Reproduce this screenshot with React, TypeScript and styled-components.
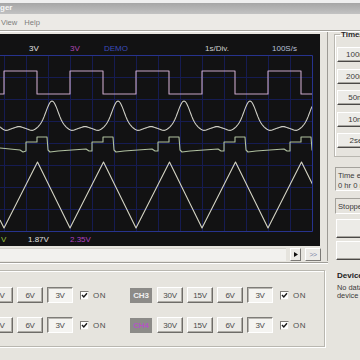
import React from "react";
import styled, { createGlobalStyle } from "styled-components";

const Global = createGlobalStyle`
  html, body { margin: 0; padding: 0; background: #e6e4de; }
  body {
    width: 360px; height: 360px; overflow: hidden;
    font-family: "Liberation Sans", Arial, sans-serif;
  }
  * { box-sizing: border-box; }
`;

const Window = styled.div`
  width: 360px;
  height: 360px;
  overflow: hidden;
  display: flex;
  flex-direction: column;
  background: #e6e4de;
`;

const TitleBar = styled.div`
  height: 14px;
  flex: none;
  background: linear-gradient(#efefef 0 3px, #a6a6a6 3px, #c2c2c2 14px);
  color: #f6f6f6;
  font-size: 8px;
  font-weight: bold;
  line-height: 10px;
  padding-top: 3px;
  white-space: nowrap;
`;

const MenuBar = styled.div`
  height: 17px;
  flex: none;
  display: flex;
  align-items: center;
  gap: 7px;
  padding-left: 1px;
  background: #eceae6;
  font-size: 7.6px;
  color: #7c7c7c;
  border-bottom: 1px solid #a4a29c;
`;

const MenuItem = styled.span``;

const Content = styled.div`
  flex: 1;
  display: flex;
  border-top: 1px solid #ffffff;
`;

const LeftCol = styled.div`
  width: 328px;
  flex: none;
  display: flex;
  flex-direction: column;
`;

const ScopePanel = styled.div`
  display: flex;
  flex-direction: column;
  padding: 2px 6px 0 0;
  border-right: 1px solid #9c9a94;
`;

const Screen = styled.div`
  width: 320px;
  height: 212px;
  background: #121213;
  display: flex;
  flex-direction: column;
`;

const ScreenRow = styled.div<{ $h: number; $pl: number; $pt: number }>`
  height: ${(p) => p.$h}px;
  flex: none;
  display: flex;
  align-items: center;
  padding-left: ${(p) => p.$pl}px;
  padding-top: ${(p) => p.$pt}px;
  font-size: 8px;
  white-space: nowrap;
`;

const ScreenLabel = styled.span<{ $w: number; $c: string }>`
  width: ${(p) => p.$w}px;
  flex: none;
  color: ${(p) => p.$c};
`;

const Plot = styled.svg`
  display: block;
  flex: none;
`;

const ScrollRow = styled.div`
  height: 13px;
  margin-top: 2px;
  display: flex;
  gap: 4px;
`;

const ScrollTrack = styled.div`
  flex: 1;
  background: #f2f1ee;
  border-top: 1px solid #d4d2cc;
`;

const SmallBtn = styled.div<{ $w: number }>`
  width: ${(p) => p.$w}px;
  height: 13px;
  flex: none;
  display: flex;
  align-items: center;
  justify-content: center;
  background: #ecebe7;
  border: 1px solid;
  border-color: #ffffff #7c7a76 #7c7a76 #ffffff;
  font-size: 7px;
  color: #8088a8;
  letter-spacing: -0.5px;
`;

const Separator = styled.div`
  height: 2px;
  margin-top: 1px;
  border-top: 1px solid #a09e98;
  border-bottom: 1px solid #ffffff;
`;

const ChannelGroup = styled.div`
  margin: 6px 3px 0 -20px;
  height: 77px;
  border: 1px solid #b9b7b0;
  box-shadow: inset 1px 1px 0 #ffffff, 1px 1px 0 #ffffff;
  padding: 16px 0 0 6px;
  display: flex;
  flex-direction: column;
  gap: 14px;
`;

const ChannelRow = styled.div`
  display: flex;
  align-items: center;
  gap: 4px;
  height: 16px;
`;

const VBtn = styled.div<{ $sunken?: boolean; $ml?: number }>`
  width: 26px;
  height: 16px;
  flex: none;
  margin-left: ${(p) => p.$ml ?? 0}px;
  display: flex;
  align-items: center;
  justify-content: center;
  font-size: 8px;
  color: #4a4a4a;
  letter-spacing: -0.3px;
  background: ${(p) => (p.$sunken ? "#f5f4f1" : "#ecebe7")};
  border: 1px solid;
  border-color: ${(p) =>
    p.$sunken ? "#7e7c78 #ffffff #ffffff #7e7c78" : "#ffffff #6e6c68 #6e6c68 #ffffff"};
  box-shadow: ${(p) =>
    p.$sunken ? "inset 1px 1px 0 #b8b6b0" : "inset -1px -1px 0 #aeaca6"};
`;

const Check = styled.div<{ $ml?: number }>`
  width: 9px;
  height: 9px;
  flex: none;
  margin-left: ${(p) => p.$ml ?? 0}px;
  background: #ffffff;
  border: 1px solid;
  border-color: #7e7c78 #e8e6e0 #e8e6e0 #7e7c78;
  display: flex;
  align-items: center;
  justify-content: center;
`;

const OnText = styled.span`
  font-size: 8px;
  color: #4e4e4e;
  letter-spacing: 0.6px;
  width: 12px;
  flex: none;
`;

const ChTag = styled.div<{ $c: string; $ml: number }>`
  width: 22px;
  height: 15px;
  flex: none;
  margin-left: ${(p) => p.$ml}px;
  background: #8c8b88;
  color: ${(p) => p.$c};
  font-size: 8px;
  font-weight: bold;
  display: flex;
  align-items: center;
  justify-content: center;
  letter-spacing: -0.2px;
`;

const RightCol = styled.div`
  flex: 1;
  margin-left: 6px;
  display: flex;
  flex-direction: column;
  white-space: nowrap;
`;

const TimeGroup = styled.fieldset`
  margin: -2px 0 0 0;
  padding: 8px 0 8px 2px;
  border: 1px solid #b9b7b0;
  border-right: none;
  box-shadow: inset 1px 1px 0 #ffffff;
  display: flex;
  flex-direction: column;
  gap: 6.5px;
  min-width: 0;
`;

const Legend = styled.legend`
  padding: 0 1px;
  margin-left: 3px;
  font-size: 8px;
  font-weight: bold;
  color: #2a2a2a;
  line-height: 9px;
`;

const TimeBtn = styled.div<{ $h?: number }>`
  width: 42px;
  height: ${(p) => p.$h ?? 15}px;
  flex: none;
  display: flex;
  align-items: center;
  justify-content: center;
  font-size: 8px;
  color: #3c3c3c;
  background: #ecebe7;
  border: 1px solid;
  border-color: #ffffff #4a4846 #4a4846 #ffffff;
  box-shadow: inset -1px -1px 0 #a8a6a0;
`;

const InfoBox = styled.div<{ $h: number; $mt: number }>`
  margin-top: ${(p) => p.$mt}px;
  margin-left: 1px;
  height: ${(p) => p.$h}px;
  border: 1px solid;
  border-color: #a4a29c #ffffff #ffffff #a4a29c;
  border-right: none;
  padding: 3px 0 0 2px;
  font-size: 7.6px;
  line-height: 10px;
  color: #3a3a3a;
`;

const BigBtns = styled.div`
  margin-top: 5px;
  margin-left: 2px;
  display: flex;
  flex-direction: column;
  gap: 3px;
`;

const Device = styled.div`
  margin-top: 12px;
  margin-left: 3px;
  font-size: 7.4px;
  line-height: 8.5px;
  color: #3a3a3a;
`;

const DeviceTitle = styled.div`
  font-weight: bold;
  font-size: 8px;
  color: #222;
  margin-bottom: 3px;
`;

// ---------- waveform geometry ----------
const P = 66;
const GRID = 22;

function squarePath(): string {
  let d = "M0,95 L4,95";
  for (let k = 0; k < 5; k++) {
    const r = 4 + P * k;
    d += ` L${r},72 L${r + 33},72 L${r + 33},95 L${r + P},95`;
  }
  return d;
}

function gaussPath(): string {
  const pts: string[] = [];
  for (let x = 0; x <= 312; x += 1) {
    const p = (((x - 52) % P) + P) % P;
    const d = Math.min(p, P - p);
    const y =
      129 -
      27 * Math.exp(-((d / 8.5) ** 2)) +
      2.5 * Math.exp(-(((d - 20) / 5) ** 2)) -
      1.5 * Math.exp(-(((33 - d) / 4) ** 2));
    pts.push(`${x},${y.toFixed(1)}`);
  }
  return "M" + pts.join(" L");
}

function stepPath(): string {
  let d = "M0,149 L20,151 L23,153 L26,152";
  for (let k = 0; k < 5; k++) {
    const r = 26 + P * k;
    d += ` L${r},143 L${r + 11},143 L${r + 11},138 L${r + 21},138 L${r + 22},151 L${r + 24},153 L${r + 32},152 L${r + 60},150 L${r + 63},152 L${r + P},152`;
  }
  return d;
}

function trianglePath(): string {
  let d = "M0,221";
  for (let k = 0; k < 6; k++) {
    const t = 4 + P * k;
    d += ` L${t},229 L${t + 33.5},163`;
  }
  return d;
}

const SQ = squarePath();
const GA = gaussPath();
const ST = stepPath();
const TR = trianglePath();

const vLines = Array.from({ length: 14 }, (_, i) => 312 - GRID * (i + 1));
const hLines = Array.from({ length: 7 }, (_, i) => 56 + GRID * (i + 1));

function Scope() {
  return (
    <Plot width={320} height={179} viewBox="0 55 320 179">
      <defs>
        <clipPath id="plotClip">
          <rect x={0} y={56} width={312} height={176} />
        </clipPath>
      </defs>
      <g stroke="#161c52" strokeWidth={1}>
        {vLines.map((x) => (
          <line key={x} x1={x + 0.5} y1={56} x2={x + 0.5} y2={232} />
        ))}
        {hLines.map((y) => (
          <line key={y} x1={0} y1={y + 0.5} x2={312} y2={y + 0.5} />
        ))}
      </g>
      <g stroke="#27338e" strokeWidth={1} fill="none">
        <path d="M0,56.5 H312.5 V232.5 H0" />
      </g>
      <g clipPath="url(#plotClip)" fill="none" strokeWidth={1.1} strokeLinejoin="round">
        <path d={SQ} stroke="#c8a6c8" />
        <path d={GA} stroke="#cfcfc6" />
        <path d={ST} stroke="#b0c0a0" />
        <path d={TR} stroke="#d4d4c4" />
      </g>
    </Plot>
  );
}

function CheckMark() {
  return (
    <svg width={7} height={7} viewBox="0 0 7 7">
      <path d="M1,3 L2.8,5 L6,1.2" stroke="#1a1a1a" strokeWidth={1.4} fill="none" />
    </svg>
  );
}

function ChannelLine({ tag, tagColor }: { tag: string; tagColor: string }) {
  return (
    <ChannelRow>
      <VBtn>6V</VBtn>
      <VBtn>6V</VBtn>
      <VBtn $sunken>3V</VBtn>
      <Check $ml={3}>
        <CheckMark />
      </Check>
      <OnText>ON</OnText>
      <ChTag $c={tagColor} $ml={21}>
        {tag}
      </ChTag>
      <VBtn $ml={1}>30V</VBtn>
      <VBtn>15V</VBtn>
      <VBtn>6V</VBtn>
      <VBtn $sunken>3V</VBtn>
      <Check $ml={3}>
        <CheckMark />
      </Check>
      <OnText>ON</OnText>
    </ChannelRow>
  );
}

export default function App() {
  return (
    <>
      <Global />
      <Window>
        <TitleBar>ger</TitleBar>
        <MenuBar>
          <MenuItem>View</MenuItem>
          <MenuItem>Help</MenuItem>
        </MenuBar>
        <Content>
          <LeftCol>
            <ScopePanel>
              <Screen>
                <ScreenRow $h={20} $pl={29} $pt={9}>
                  <ScreenLabel $w={41} $c="#e4e4e4">3V</ScreenLabel>
                  <ScreenLabel $w={34} $c="#b048b4">3V</ScreenLabel>
                  <ScreenLabel $w={101} $c="#3c4cb8">DEMO</ScreenLabel>
                  <ScreenLabel $w={67} $c="#d0d0d0">1s/Div.</ScreenLabel>
                  <ScreenLabel $w={40} $c="#b8c0d8">100S/s</ScreenLabel>
                </ScreenRow>
                <Scope />
                <ScreenRow $h={13} $pl={1} $pt={0}>
                  <ScreenLabel $w={27} $c="#98c040">V</ScreenLabel>
                  <ScreenLabel $w={42} $c="#e0e0e0">1.87V</ScreenLabel>
                  <ScreenLabel $w={40} $c="#b040c0">2.35V</ScreenLabel>
                </ScreenRow>
              </Screen>
              <ScrollRow>
                <ScrollTrack />
                <SmallBtn $w={11}>
                  <svg width={4} height={5} viewBox="0 0 4 5">
                    <path d="M0,0 L4,2.5 L0,5 Z" fill="#111" />
                  </svg>
                </SmallBtn>
                <SmallBtn $w={16}>&gt;&gt;</SmallBtn>
              </ScrollRow>
            </ScopePanel>
            <Separator />
            <ChannelGroup>
              <ChannelLine tag="CH3" tagColor="#f0f0f0" />
              <ChannelLine tag="CH4" tagColor="#b455c4" />
            </ChannelGroup>
          </LeftCol>
          <RightCol>
            <TimeGroup>
              <Legend>Time/Div</Legend>
              <TimeBtn>100ms</TimeBtn>
              <TimeBtn>200ms</TimeBtn>
              <TimeBtn>50ms</TimeBtn>
              <TimeBtn>10ms</TimeBtn>
              <TimeBtn>2sec</TimeBtn>
            </TimeGroup>
            <InfoBox $h={24} $mt={10}>
              Time elapsed
              <br />0 hr 0 min
            </InfoBox>
            <InfoBox $h={16} $mt={7}>
              Stopped
            </InfoBox>
            <BigBtns>
              <TimeBtn $h={19} />
              <TimeBtn $h={19} />
            </BigBtns>
            <Device>
              <DeviceTitle>Device</DeviceTitle>
              No data
              <br />
              device
            </Device>
          </RightCol>
        </Content>
      </Window>
    </>
  );
}
